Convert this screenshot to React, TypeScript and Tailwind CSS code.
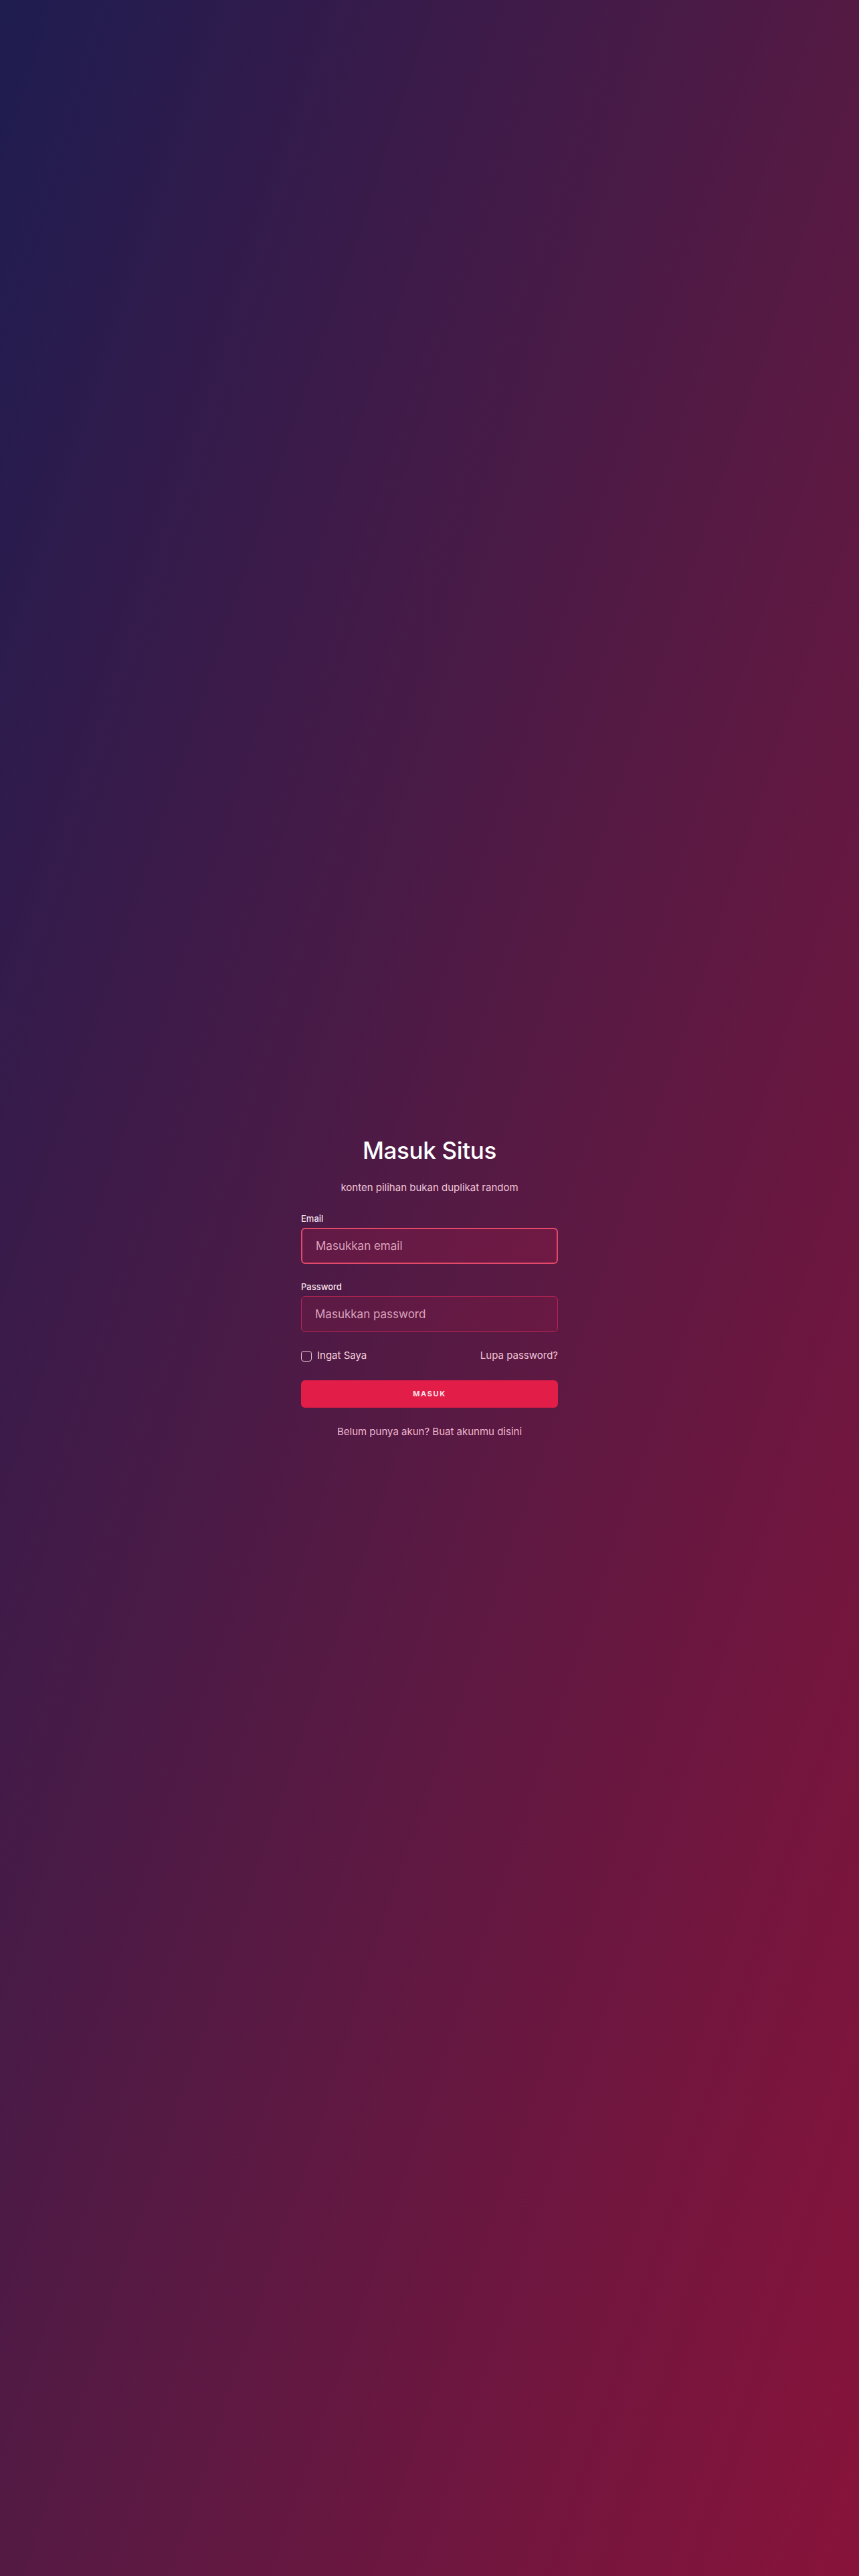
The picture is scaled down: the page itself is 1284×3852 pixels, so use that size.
import React from "react";

export default function App() {
  return (
    <div
      className="min-h-screen w-full flex items-center justify-center bg-[linear-gradient(to_bottom_right,#1e1c50,#541a44_50%,#88133a)]"
      style={{ fontFamily: "Inter, 'Noto Sans', sans-serif" }}
    >
      <div className="w-[384px] flex flex-col">
        <h1 className="text-center text-[35px] leading-10 font-medium tracking-[-0.01em] text-white">Masuk Situs</h1>
        <p className="mt-6 text-center text-[15px] leading-6 text-[#f3c6d8]">konten pilihan bukan duplikat random</p>

        <label className="mt-6 text-[13px] leading-5 font-medium text-[#f7e1ea]">Email</label>
        <input
          type="text"
          placeholder="Masukkan email"
          className="mt-1 h-[54px] w-full rounded-md border-2 border-[#e4496a] bg-[#e11d48]/15 px-5 text-[17px] text-white placeholder:text-[#dca2bd] outline-none"
        />

        <label className="mt-6 text-[13px] leading-5 font-medium text-[#f7e1ea]">Password</label>
        <input
          type="password"
          placeholder="Masukkan password"
          className="mt-1 h-[54px] w-full rounded-md border border-[#b92455] bg-[#e11d48]/10 px-5 text-[17px] text-white placeholder:text-[#dca2bd] outline-none"
        />

        <div className="mt-6 flex items-center justify-between h-6">
          <label className="flex items-center gap-2 text-[15px] text-[#f2d2de]">
            <span className="w-4 h-4 rounded border border-[#e7c3d3]" />
            Ingat Saya
          </label>
          <span className="text-[15px] text-[#f2c4d6]">Lupa password?</span>
        </div>

        <button className="mt-6 h-[41px] w-full rounded-md bg-[#e11d48] text-[11px] font-bold tracking-[0.15em] text-[#fde2ea]">
          MASUK
        </button>

        <p className="mt-6 text-center text-[15px] leading-6 text-[#f0b8cf]">Belum punya akun? Buat akunmu disini</p>
      </div>
    </div>
  );
}
